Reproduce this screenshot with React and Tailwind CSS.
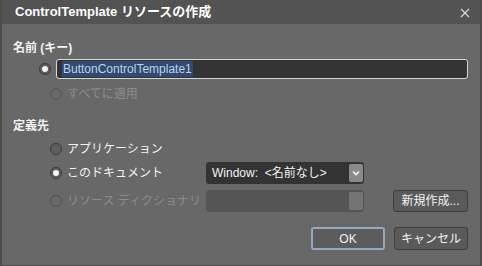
import React from "react";

const font = { fontFamily: '"Liberation Sans", "Noto Sans CJK JP", sans-serif' };

function Radio({ checked, disabled }) {
  return (
    <span
      className={
        "flex h-[12px] w-[12px] shrink-0 items-center justify-center rounded-full border " +
        (disabled ? "border-[#525252]" : "border-[#3a3a3a] bg-[#5e5e5e]")
      }
    >
      {checked && <span className="h-[6px] w-[6px] rounded-full bg-[#f4f4f4]" />}
    </span>
  );
}

function RadioRow({ checked, disabled, label }) {
  return (
    <div className="flex h-[20px] items-center gap-[5px] pl-[37px]">
      <Radio checked={checked} disabled={disabled} />
      <span className={disabled ? "text-[#8c8c8c]" : "text-[#f2f2f2]"}>{label}</span>
    </div>
  );
}

export default function App() {
  return (
    <div
      className="flex h-[266px] w-[482px] flex-col overflow-hidden border-x-2 border-b border-[#4c4c4c] bg-[#686868] text-[12px] text-[#f2f2f2]"
      style={font}
    >
      <div className="flex h-[24px] shrink-0 items-center justify-between bg-[#535353] pl-[13px] pr-[10px]">
        <span className="text-[13px] font-bold text-white">ControlTemplate リソースの作成</span>
        <svg width="10" height="10" viewBox="0 0 10 10" className="mt-[1px]">
          <path d="M1 1L9 9M9 1L1 9" stroke="#d8d8d8" strokeWidth="1.2" />
        </svg>
      </div>

      <div className="flex flex-1 flex-col pl-[11px] pr-[12px]">
        <div className="mt-[15px] h-[18px] font-bold">名前 (キー)</div>
        <div className="mt-[2px] flex items-center gap-[5px] pl-[26px]">
          <Radio checked />
          <div className="flex h-[20px] flex-1 items-center rounded-[3px] border border-[#d6d6d6] bg-[#333333] pl-[5px]">
            <span className="bg-[#324a6d] px-[1px] leading-[16px] text-[#b9d3f5]">ButtonControlTemplate1</span>
          </div>
        </div>
        <div className="mt-[5px]">
          <RadioRow disabled label="すべてに適用" />
        </div>

        <div className="mt-[13px] h-[18px] font-bold">定義先</div>
        <div className="mt-[4px]">
          <RadioRow label="アプリケーション" />
        </div>
        <div className="mt-[3px] flex items-center">
          <div className="w-[193px]">
            <RadioRow checked label="このドキュメント" />
          </div>
          <div className="flex h-[22px] w-[158px] items-center justify-between rounded-[3px] bg-[#333333] pl-[6px] pr-[1px]">
            <span>Window:&nbsp; &lt;名前なし&gt;</span>
            <span className="flex h-[18px] w-[14px] items-center justify-center rounded-[2px] bg-[#8a8a8a]">
              <svg width="8" height="6" viewBox="0 0 8 6">
                <path d="M1 1.5L4 4.5L7 1.5" stroke="#f5f5f5" strokeWidth="1.6" fill="none" />
              </svg>
            </span>
          </div>
        </div>
        <div className="mt-[6px] flex items-center">
          <div className="w-[193px]">
            <RadioRow disabled label="リソース ディクショナリ" />
          </div>
          <div className="flex h-[22px] w-[158px] items-center justify-end rounded-[3px] bg-[#555555] pr-[1px]">
            <span className="h-[18px] w-[14px] rounded-[2px] bg-[#747474]" />
          </div>
          <div className="ml-auto flex h-[22px] w-[75px] items-center justify-center rounded-[3px] border border-[#3e3e3e] bg-[#5a5a5a]">
            新規作成...
          </div>
        </div>

        <div className="mt-[15px] flex justify-end gap-[9px]">
          <div className="flex h-[23px] w-[74px] items-center justify-center rounded-[3px] border-2 border-[#93a9c2] bg-[#5c5c5c]">
            OK
          </div>
          <div className="flex h-[23px] w-[74px] items-center justify-center rounded-[3px] border border-[#3e3e3e] bg-[#5a5a5a]">
            キャンセル
          </div>
        </div>
      </div>
    </div>
  );
}
